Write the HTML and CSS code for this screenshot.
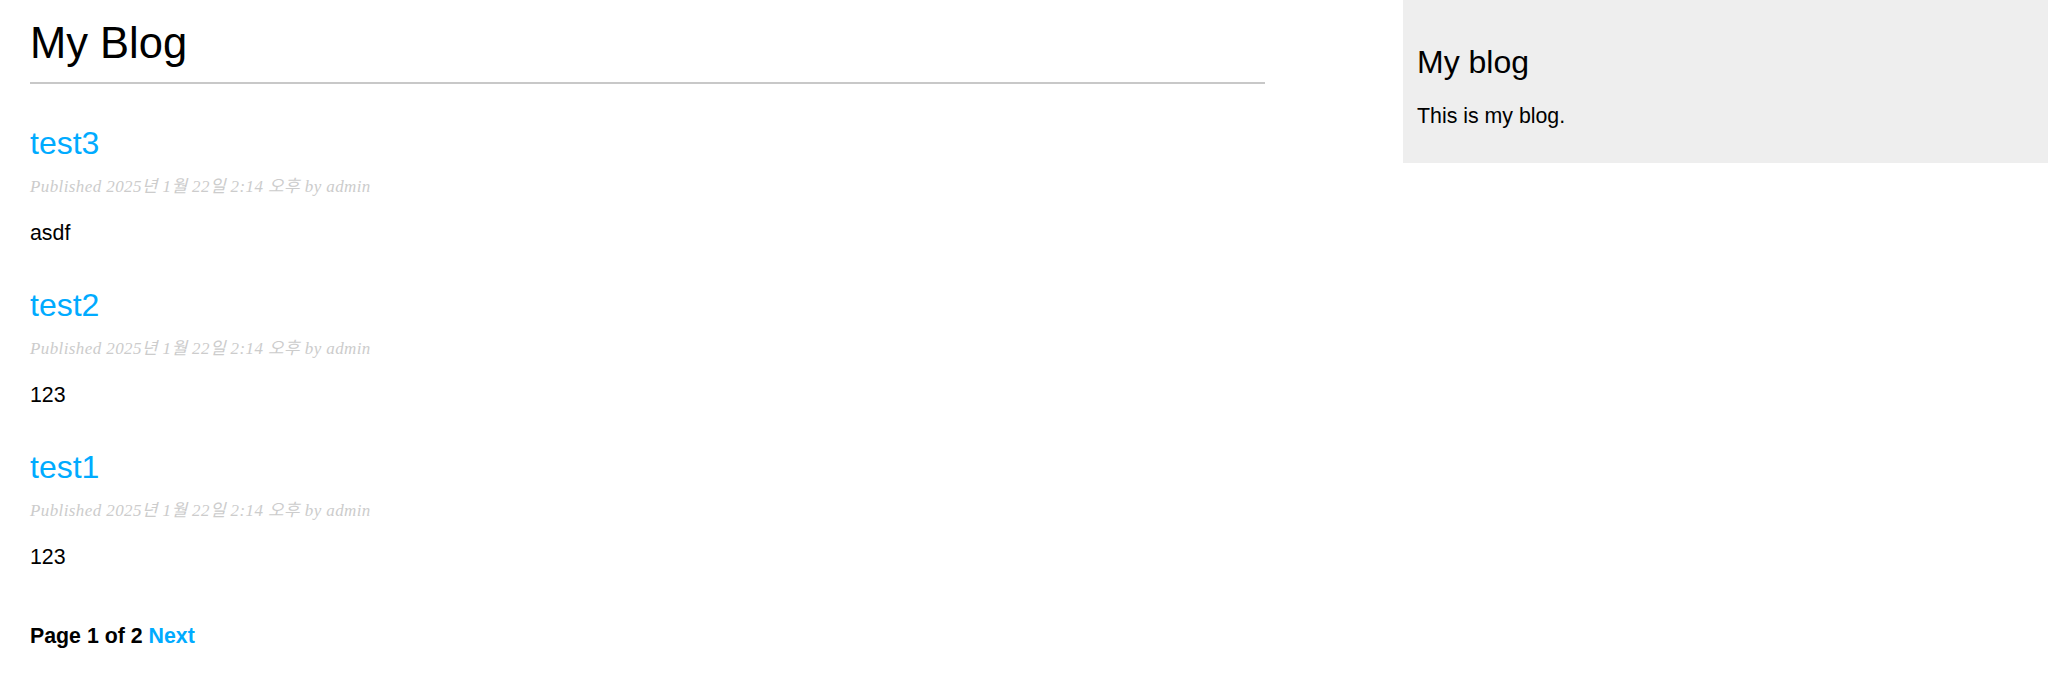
FILE: index.html
```html
<!DOCTYPE html>
<html lang="ko">
<head>
    <meta charset="UTF-8">
    <meta name="viewport" content="width=device-width, initial-scale=1.0">
    <title>My Blog</title>
    <link rel="stylesheet" href="styles.css">
</head>
<body>
    <div class="page">
        <div id="content">
            <h1>My Blog</h1>

            <h2><a href="#">test3</a></h2>
            <p class="date">Published 2025년 1월 22일 2:14 오후 by admin</p>
            <p class="body">asdf</p>

            <h2><a href="#">test2</a></h2>
            <p class="date">Published 2025년 1월 22일 2:14 오후 by admin</p>
            <p class="body">123</p>

            <h2><a href="#">test1</a></h2>
            <p class="date">Published 2025년 1월 22일 2:14 오후 by admin</p>
            <p class="body">123</p>

            <div class="pagination">
                <span class="current">Page 1 of 2</span>
                <a href="#">Next</a>
            </div>
        </div>
        <div id="sidebar">
            <h2>My blog</h2>
            <p>This is my blog.</p>
        </div>
    </div>
</body>
</html>
```

FILE: styles.css
```css
body {
    margin: 0;
    padding: 0;
    font-family: "Liberation Sans", Helvetica, Arial, sans-serif;
    font-size: 21.33px;
    color: #000;
}
a, a:visited {
    color: #00abff;
    text-decoration: none;
}
.page {
    display: flex;
    justify-content: space-between;
    align-items: flex-start;
}
#content {
    width: 1235px;
    padding-left: 30px;
}
h1 {
    font-weight: normal;
    font-size: 43.5px;
    line-height: 50px;
    margin: 18px 0 0;
    padding: 0 0 14px 0;
    border-bottom: 2px solid #c8c8c8;
}
h2 {
    font-weight: normal;
    font-size: 32px;
    line-height: 38px;
    margin: 40px 0 0;
}
p {
    margin: 0;
}
p.date {
    color: #ccc;
    font-family: Georgia, "Liberation Serif", "Noto Sans CJK KR", serif;
    font-size: 17px;
    line-height: 20px;
    letter-spacing: 0.4px;
    font-style: italic;
    margin-top: 15px;
}
p.body {
    line-height: 26px;
    margin-top: 23px;
}
.pagination {
    margin-top: 53px;
    font-weight: bold;
    line-height: 26px;
}
#sidebar {
    width: 645px;
    box-sizing: border-box;
    padding: 13px 14px;
    background: #eeeeee;
}
#sidebar h2 {
    margin: 30px 0 0;
}
#sidebar p {
    line-height: 26px;
    margin: 22px 0 21px;
}
```
